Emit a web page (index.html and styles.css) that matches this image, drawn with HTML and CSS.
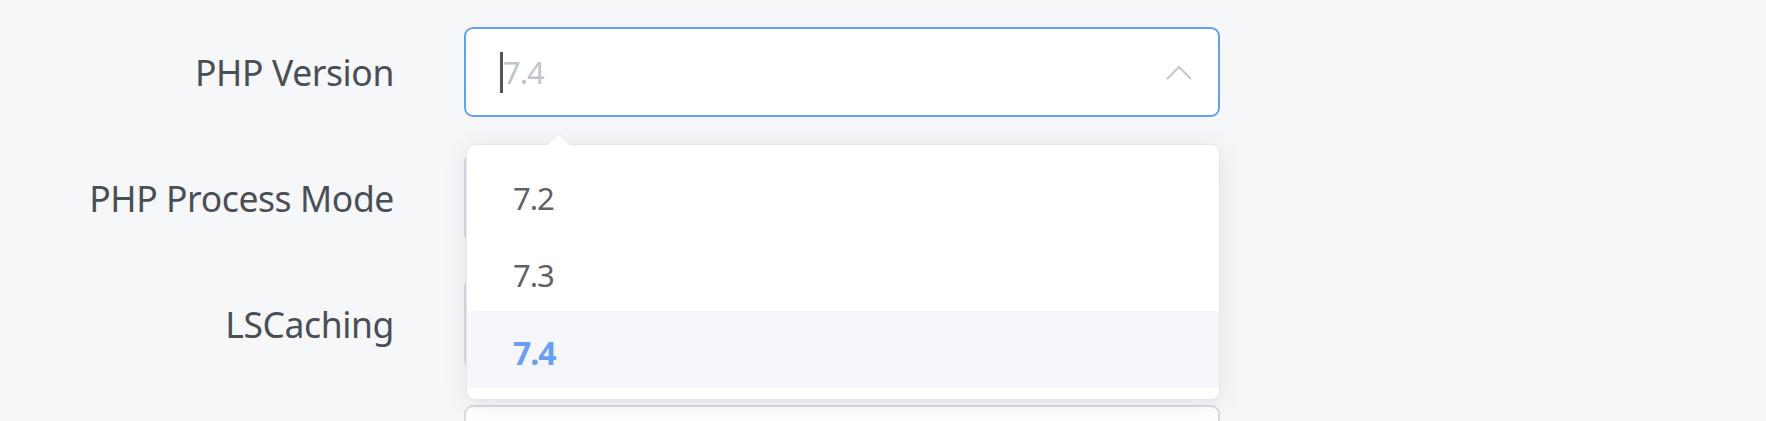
FILE: index.html
```html
<!DOCTYPE html>
<html lang="en">
<head>
<meta charset="utf-8">
<title>PHP settings</title>
<link rel="stylesheet" href="styles.css">
</head>
<body>
<div class="form">

  <div class="form-row">
    <label class="form-label">PHP Version</label>
    <div class="select">
      <div class="select-input is-focus">
        <span class="caret"></span><span class="placeholder">7.4</span>
        <svg class="select-arrow" width="26" height="15" viewBox="0 0 26 15">
          <polyline points="1,14 13,2 25,14" fill="none" stroke="#c4c7ce" stroke-width="2"/>
        </svg>
      </div>
      <!-- open dropdown of the PHP Version select -->
      <div class="dropdown">
        <div class="popper-arrow"></div>
        <ul class="options">
          <li class="option">7.2</li>
          <li class="option">7.3</li>
          <li class="option selected">7.4</li>
        </ul>
      </div>
    </div>
  </div>

  <div class="form-row">
    <label class="form-label">PHP Process Mode</label>
    <div class="select">
      <div class="select-input"></div>
    </div>
  </div>

  <div class="form-row">
    <label class="form-label">LSCaching</label>
    <div class="select">
      <div class="select-input"></div>
    </div>
  </div>

  <div class="form-row">
    <label class="form-label"></label>
    <div class="select">
      <div class="select-input"></div>
    </div>
  </div>

</div>
</body>
</html>
```

FILE: styles.css
```css
html, body      {margin:0; padding:0;}
body            {background:#f6f7f9; font-family:"Noto Sans", "Open Sans", sans-serif; overflow:hidden;}

.form           {padding-top:27px;}
.form-row       {display:flex; align-items:center; height:90px; margin-bottom:36px;}
.form-label     {width:394px; padding-right:70px; text-align:right; font-size:35.5px; color:#4a4f56; line-height:90px; letter-spacing:-0.4px;}

.select         {position:relative; width:756px; height:90px;}
.select-input   {box-sizing:border-box; height:90px; border:2px solid #d8dbe1; border-radius:9px; background:#fff;
                 display:flex; align-items:center; padding-left:34px; padding-right:26px;}
.select-input.is-focus {border-color:#66a0f6;}

.caret          {display:inline-block; width:3px; height:41px; background:#555;}
.placeholder    {font-size:31px; color:#c0c4cc; letter-spacing:-1px; flex:1;}
.select-arrow   {display:block;}

.dropdown       {position:absolute; top:117px; left:2px; right:0; z-index:5; box-sizing:border-box; height:256px;
                 background:#fff; border:1px solid #e4e7ed; border-radius:9px;
                 box-shadow:0 4px 26px rgba(0,0,0,0.09);}
.popper-arrow   {position:absolute; top:-9px; left:83px; width:16px; height:16px; background:#fff;
                 border-top:1px solid #e4e7ed; border-left:1px solid #e4e7ed; transform:rotate(45deg);}
.options        {list-style:none; margin:0; padding:12px 0; position:relative;}
.option         {height:71px; padding-top:6px; line-height:71px; padding-left:46px; font-size:31px; color:#5f6267; letter-spacing:-1px;}
.option.selected{background:#f5f6fa; color:#6a9ff4; font-weight:bold; font-size:32px;}
```
